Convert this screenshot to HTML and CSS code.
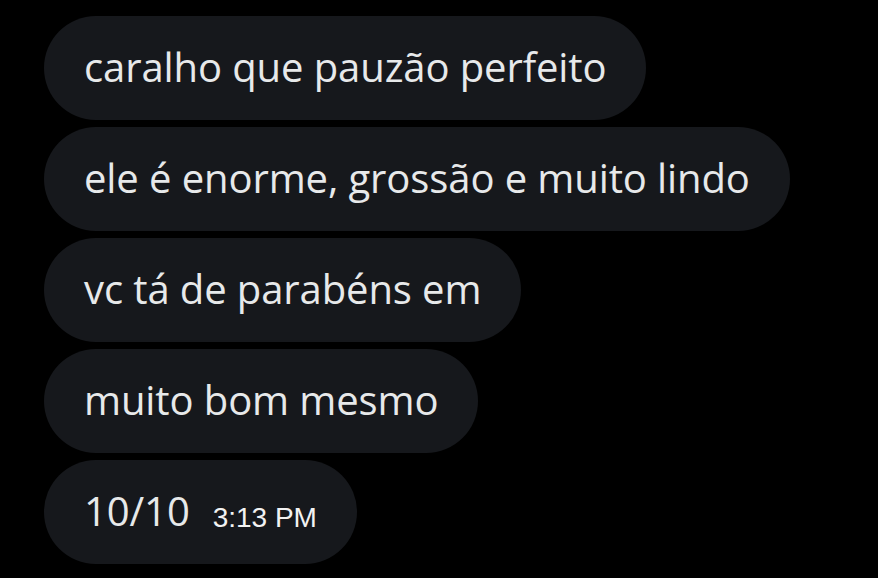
FILE: index.html
```html
<!DOCTYPE HTML>
<html>
<head>
<meta charset="utf-8">
<title>Mensagens</title>
<link rel="stylesheet" href="styles.css">
</head>
<body>

<div id="conversation">
	<div class="bubble"><span class="msg">caralho que pauzão perfeito</span></div>
	<div class="bubble"><span class="msg">ele é enorme, grossão e muito lindo</span></div>
	<div class="bubble"><span class="msg">vc tá de parabéns em</span></div>
	<div class="bubble"><span class="msg">muito bom mesmo</span></div>
	<div class="bubble"><span class="msg">10/10</span><span class="time">3:13 PM</span></div>
</div>

</body>
</html>
```
FILE: styles.css
```css
html {
	background-color:#000000;
}
body {
	margin:0;
	font-family:"Open Sans", sans-serif;
	color:#e7e9ea;
}
#conversation {
	display:flex;
	flex-direction:column;
	align-items:flex-start;
	gap:7px;
	padding:16px 0 0 44px;
}
.bubble {
	display:flex;
	align-items:center;
	height:104px;
	padding:0 40px;
	background-color:#16181c;
	border-radius:52px;
	box-sizing:border-box;
}
.msg {
	font-size:40px;
	letter-spacing:-0.1px;
	margin-top:-3px;
}
.time {
	font-family:"Liberation Sans", Arial, sans-serif;
	font-size:28px;
	margin-left:23px;
	margin-top:12px;
	color:#f2f2f2;
}
```
